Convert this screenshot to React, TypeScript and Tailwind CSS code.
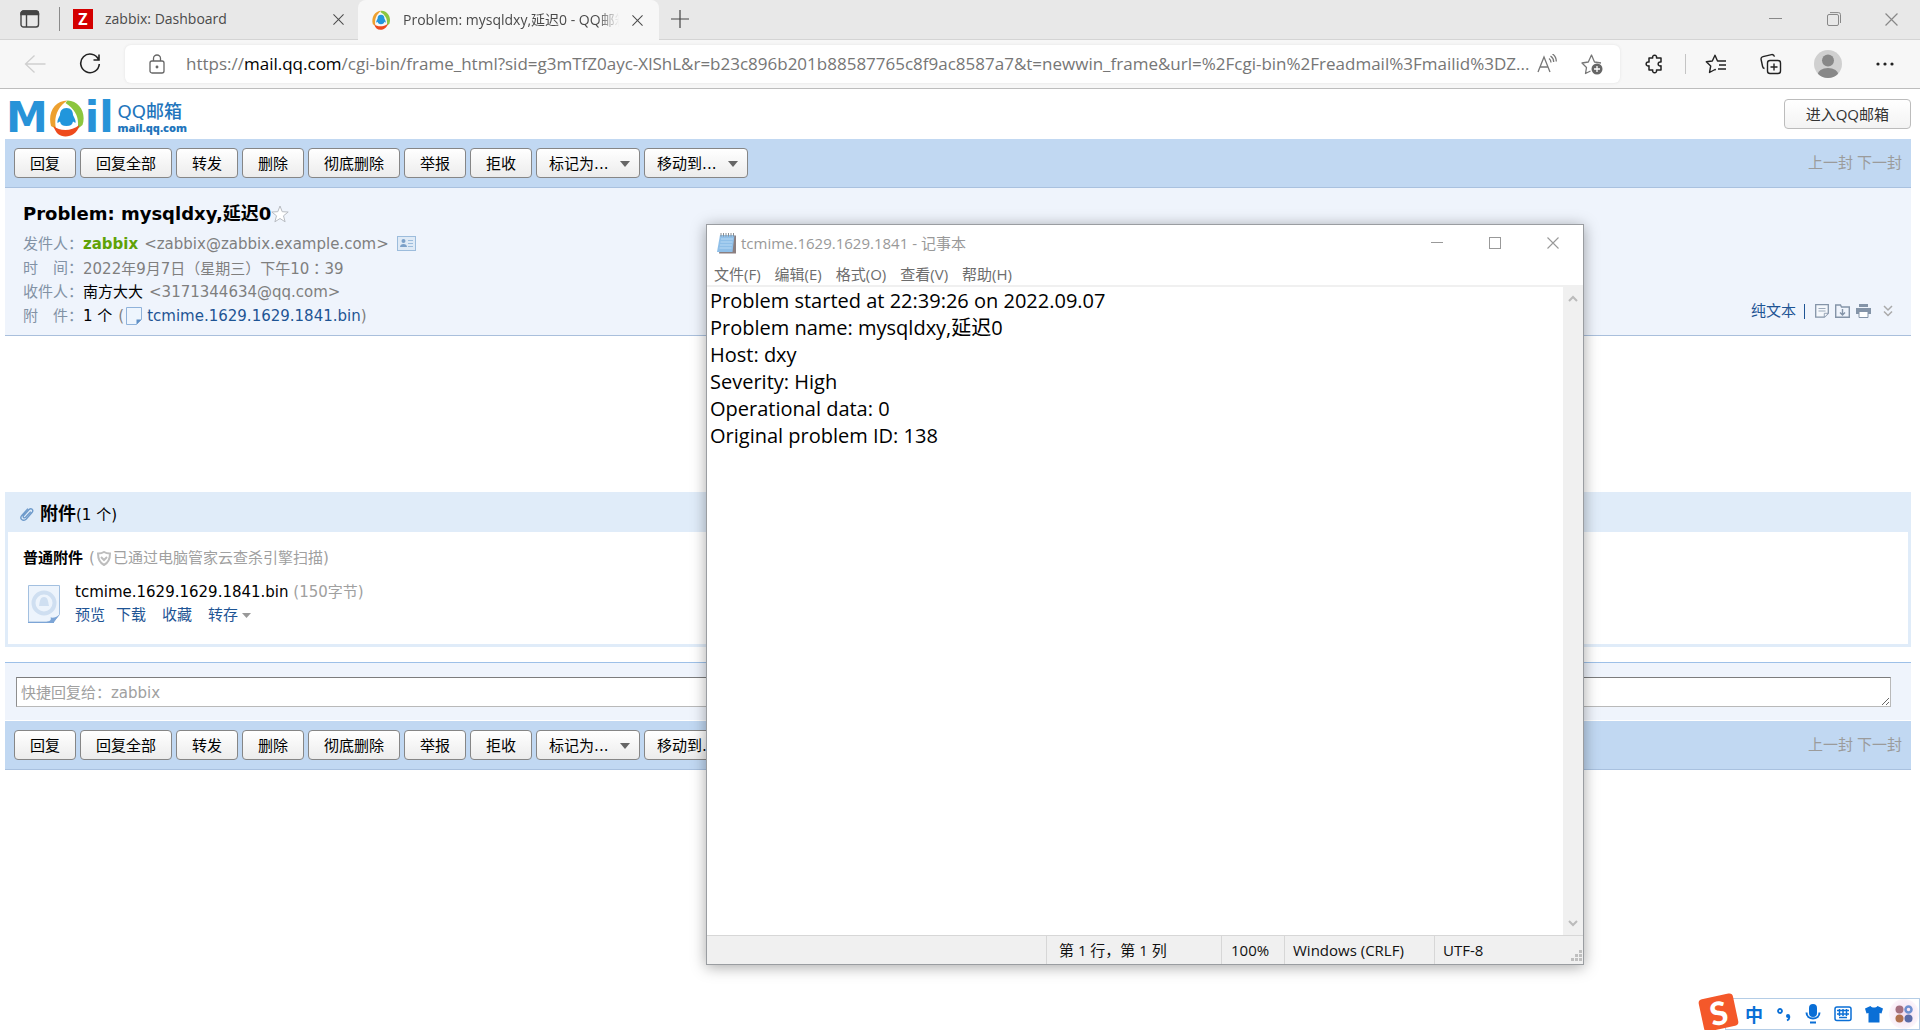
import type { ReactNode } from "react";

const actions = ["回复", "回复全部", "转发", "删除", "彻底删除", "举报", "拒收"];
const menus = ["标记为...", "移动到..."];
const notepadMenu = ["文件(F)", "编辑(E)", "格式(O)", "查看(V)", "帮助(H)"];

const notepadText = `Problem started at 22:39:26 on 2022.09.07
Problem name: mysqldxy,延迟0
Host: dxy
Severity: High
Operational data: 0
Original problem ID: 138`;

function CloseIcon({ className }: { className?: string }) {
  return (
    <svg viewBox="0 0 12 12" className={className} fill="none" stroke="currentColor" strokeWidth="1.1">
      <path d="M.5.5l11 11M11.5.5l-11 11" />
    </svg>
  );
}

function QQRing({ className }: { className?: string }) {
  return (
    <svg viewBox="0 0 36 38" className={className} fill="none">
      <path d="M19 1.500C6 1.500-1 14 2.500 27l5 3C5 18 9 8 19 1.500z" fill="#eda02f" />
      <path d="M19 1.500C31 2 38 14 34 26l-5 4c2-10-1-19-12-26z" fill="#8cc63f" />
      <path d="M5 27c6 5 17 6 26-1-2 8-8 11.500-14 11.500C11 37.500 7 34 5 27z" fill="#ee4a1c" />
      <path d="M18 9c-4.500 0-6.500 3-6.500 7-1.500 3-3 5.500-2.500 8l2.500-1.500c.5 3 2.500 4.500 6.500 4.500s6-1.500 6.500-4.500l2.500 1.500c.5-2.500-1-5-2.500-8 0-4-2-7-6.500-7z" fill="#2196dc" />
    </svg>
  );
}

function TabBar() {
  return (
    <div className="flex h-10 items-end border-b border-[#d4d4d4] bg-[#e8e8e8] text-sm text-[#4a4a4a]">
      <button aria-label="标签页操作" className="flex h-10 w-[59px] items-center pl-5">
        <svg viewBox="0 0 20 18" className="h-[18px] w-5" fill="none" stroke="#444" strokeWidth="1.400">
          <rect x="1" y="1" width="17.500" height="16" rx="2.500" />
          <path d="M1 3.500a2.500 2.500 0 0 1 2.500-2.500h12.500a2.500 2.500 0 0 1 2.500 2.500v1H1z" fill="#444" />
          <path d="M6.500 5v12" />
        </svg>
      </button>
      <div className="mb-2 h-6 w-px bg-[#8a8a8a]" />
      <div className="flex h-10 w-[298px] items-center pl-[13px] pr-[14px]">
        <span className="flex h-5 w-5 items-center justify-center bg-[#d40000] text-base leading-5 font-bold text-white">Z</span>
        <a href="#" className="ml-3 flex-1">zabbix: Dashboard</a>
        <button aria-label="关闭标签页">
          <CloseIcon className="h-[11px] w-[11px]" />
        </button>
      </div>
      <div className="-mb-px flex h-10 w-[301px] items-center rounded-t-lg bg-[#f7f7f7] pl-[13px] pr-4">
        <QQRing className="h-5 w-5" />
        <a href="#" className="ml-3 w-[216px] overflow-hidden whitespace-nowrap [mask-image:linear-gradient(to_right,black_90%,transparent)]">
          Problem: mysqldxy,延迟0 - QQ邮箱
        </a>
        <button aria-label="关闭标签页" className="ml-auto">
          <CloseIcon className="h-[11px] w-[11px]" />
        </button>
      </div>
      <button aria-label="新建标签页" className="flex h-10 items-center pl-3">
        <svg viewBox="0 0 18 18" className="h-[18px] w-[18px]" stroke="#444" strokeWidth="1.200">
          <path d="M9 0v18M0 9h18" />
        </svg>
      </button>
      <div className="ml-auto flex h-10 items-center gap-[44px] pr-[22px] text-[#888]">
        <button aria-label="最小化">
          <svg viewBox="0 0 14 14" className="h-[14px] w-[14px]" stroke="currentColor"><path d="M0 6.500h13" /></svg>
        </button>
        <button aria-label="还原">
          <svg viewBox="0 0 14 14" className="h-[14px] w-[14px]" fill="none" stroke="currentColor">
            <rect x=".5" y="2.500" width="11" height="11" rx="1.500" />
            <path d="M3 .6h8.500a2 2 0 0 1 2 2V11" />
          </svg>
        </button>
        <button aria-label="关闭"><CloseIcon className="h-[13px] w-[13px]" /></button>
      </div>
    </div>
  );
}

function AddressBar() {
  return (
    <div className="flex h-[49px] items-center border-b border-[#bdbdbd] bg-[#f7f7f7] pl-6">
      <button aria-label="后退">
        <svg viewBox="0 0 22 20" className="h-5 w-[22px]" fill="none" stroke="#cfcfcf" strokeWidth="1.300">
          <path d="M10.500 1.500L1.500 10l9 8.500M1.500 10h20" />
        </svg>
      </button>
      <button aria-label="刷新" className="ml-[33px]">
        <svg viewBox="0 0 22 22" className="h-[22px] w-[22px]" fill="none" stroke="#222" strokeWidth="1.600">
          <path d="M19.500 6.500A9.300 9.300 0 1 0 20.300 11M20 1.500v5.500h-5.500" />
        </svg>
      </button>
      <div className="ml-6 flex h-[38px] min-w-0 flex-1 items-center rounded-md bg-white pl-6 shadow-[0_0_3px_#e2e2e2]">
        <svg viewBox="0 0 16 20" className="h-5 w-4 shrink-0" fill="none" stroke="#666" strokeWidth="1.300">
          <rect x="1" y="7" width="14" height="12" rx="2" />
          <path d="M4.500 7V4.500a3.500 3.500 0 0 1 7 0V7" />
          <circle cx="8" cy="13" r=".8" fill="#666" />
        </svg>
        <div className="ml-[21px] flex-1 text-[17px] leading-6 whitespace-nowrap text-[#767676]">
          https://<span className="text-black">mail.qq.com</span>/cgi-bin/frame_html?sid=g3mTfZ0ayc-XlShL&amp;r=b23c896b201b88587765c8f9ac8587a7&amp;t=newwin_frame&amp;url=%2Fcgi-bin%2Freadmail%3Fmailid%3DZ...
        </div>
        <button aria-label="大声朗读" className="shrink-0">
          <svg viewBox="0 0 20 20" className="h-5 w-5" fill="none" stroke="#777" strokeWidth="1.300">
            <path d="M1 18L7 3l6 15M3 13h8M12 4.500c1.500 1 2 2.500 2 4M13.500 2c2.200 1.500 3.200 3.500 3.200 6M15.500 0c2.500 1.700 3.800 4.500 3.800 7.500" />
          </svg>
        </button>
        <button aria-label="添加到收藏夹" className="mr-[17px] ml-6 shrink-0">
          <svg viewBox="0 0 22 22" className="h-[22px] w-[22px]" fill="none" stroke="#777" strokeWidth="1.300">
            <path d="M9.500 18l-5 2.500 1-6L1 10l6.300-1L10.500 2l3 7 6.500 1" strokeLinejoin="round" />
            <circle cx="16" cy="16" r="5.500" fill="#666" stroke="none" />
            <path d="M16 13v6M13 16h6" stroke="white" />
          </svg>
        </button>
      </div>
      <div className="flex items-center pl-[25px]">
        <button aria-label="扩展">
          <svg viewBox="0 0 20 20" className="h-5 w-5" fill="none" stroke="#222" strokeWidth="1.500">
            <path d="M4 4h3.700c-1-3.800 4.800-3.800 3.800 0H16v4c-3.800-1-3.800 4.800 0 3.800V16h-4.500c1 3.800-4.800 3.800-3.800 0H4v-4.200c-3.800 1-3.800-4.800 0-3.800z" strokeLinejoin="round" />
          </svg>
        </button>
        <div className="ml-5 h-5 w-px bg-[#c4c4c4]" />
        <button aria-label="收藏夹" className="ml-[19px]">
          <svg viewBox="0 0 22 20" className="h-5 w-[22px]" fill="none" stroke="#222" strokeWidth="1.400">
            <path d="M13.500 7h-1L10 1.200 7.300 7l-6 .8 4.400 4.200-1.200 6.500 5.500-3 .8.400M13 7h8M14 11h7M13 15h8" strokeLinejoin="round" />
          </svg>
        </button>
        <button aria-label="集锦" className="ml-[33px]">
          <svg viewBox="0 0 22 22" className="h-[22px] w-[22px]" fill="none" stroke="#222" strokeWidth="1.400">
            <path d="M4.500 15.500c-1.200-.2-1.700-1-1.900-2L1.100 6.500C.8 5 1.500 4 3 3.600l8.500-2c1.500-.3 2.500.4 3 2" />
            <rect x="7.500" y="7.500" width="13" height="13" rx="2.500" />
            <path d="M14 10.500v7M10.500 14h7" />
          </svg>
        </button>
        <button aria-label="个人资料" className="ml-8">
          <svg viewBox="0 0 28 28" className="h-7 w-7">
            <clipPath id="face"><circle cx="14" cy="14" r="14" /></clipPath>
            <circle cx="14" cy="14" r="14" fill="#d0d0d0" />
            <g clipPath="url(#face)" fill="#888">
              <circle cx="14" cy="10.500" r="6" />
              <ellipse cx="14" cy="25" rx="10.500" ry="7" />
            </g>
          </svg>
        </button>
        <button aria-label="设置及其他" className="mr-[26px] ml-[34px]">
          <svg viewBox="0 0 18 4" className="h-1 w-[18px]" fill="#222">
            <circle cx="2" cy="2" r="1.600" /><circle cx="9" cy="2" r="1.600" /><circle cx="16" cy="2" r="1.600" />
          </svg>
        </button>
      </div>
    </div>
  );
}

function Logo() {
  return (
    <div className="flex h-[50px] items-center pt-2 pl-px">
      <span className="text-[42px] leading-[42px] font-bold text-[#2893d8]">M</span>
      <QQRing className="h-[38px] w-[37px]" />
      <span className="text-[42px] leading-[42px] font-bold text-[#2893d8]">il</span>
      <span className="ml-1 flex flex-col text-[#2275bc]">
        <span className="text-lg leading-5 font-medium">QQ邮箱</span>
        <span className="font-['Open_Sans',sans-serif] text-[11px] leading-3 font-extrabold">mail.qq.com</span>
      </span>
    </div>
  );
}

function MailToolbar() {
  return (
    <div className="flex h-[49px] items-center gap-1 border-b border-[#a9c1df] bg-[#c1d8f2] pr-[9px] pl-[9px]">
      {actions.map((label) => (
        <button key={label} className="h-[30px] rounded border border-[#868686] bg-linear-to-b from-white to-[#ececec] px-[15px] pt-px leading-7">
          {label}
        </button>
      ))}
      {menus.map((label) => (
        <div key={label} className="relative">
          <select aria-label={label} className="h-[30px] w-[104px] appearance-none rounded border border-[#868686] bg-linear-to-b from-white to-[#ececec] pt-px pl-3 leading-7">
            <option>{label}</option>
          </select>
          <svg viewBox="0 0 10 6" className="pointer-events-none absolute top-[13px] right-[10px] h-[6px] w-[10px]" fill="#666"><path d="M0 0h10L5 6z" /></svg>
        </div>
      ))}
      <div className="ml-auto flex gap-1 text-[#9b9b9b]">
        <span>上一封</span>
        <span>下一封</span>
      </div>
    </div>
  );
}

function Row({ label, children }: { label: string; children: ReactNode }) {
  return (
    <div className="flex h-6 items-center text-[#7f7f7f]">
      <span className="w-[60px] text-[#8292a5]">{label}</span>
      {children}
    </div>
  );
}

function MailHeader() {
  return (
    <div className="flex h-[148px] items-end justify-between border-b border-[#a9bfdc] bg-[#eff4fc] pr-[18px] pb-[7px] pl-[18px]">
      <div>
        <h1 className="mb-[6px] flex items-center text-lg leading-6 font-bold text-black">
          Problem: mysqldxy,延迟0
          <svg viewBox="0 0 18 18" className="h-[18px] w-[18px]" fill="#fff" stroke="#b8bcc2">
            <path d="M9 1l2.200 5.700 6 .3-4.700 3.800 1.600 6L9 13.500l-5.100 3.300 1.600-6L.8 7l6-.3z" />
          </svg>
        </h1>
        <Row label="发件人：">
          <b className="mr-[6px] text-[#5fa207]">zabbix</b>
          &lt;zabbix@zabbix.example.com&gt;
          <svg viewBox="0 0 20 16" className="ml-2 h-4 w-5" fill="none" stroke="#9cbcdc">
            <rect x=".5" y=".5" width="18" height="14" fill="#dfeaf6" />
            <circle cx="6.500" cy="5" r="2" fill="#7ba0c8" stroke="none" />
            <path d="M3 11c0-4 7-4 7 0z" fill="#7ba0c8" stroke="none" />
            <path d="M11 4.500h5M11 7.500h5M11 10.500h5" />
          </svg>
        </Row>
        <Row label="时　间：">
          <span>2022年9月7日（星期三）下午10<span className="font-['Noto_Sans_CJK_TC',sans-serif]">：</span>39</span>
        </Row>
        <Row label="收件人：">
          <span className="mr-[6px] text-black">南方大大</span>
          &lt;3171344634@qq.com&gt;
        </Row>
        <Row label="附　件：">
          <span className="mr-[6px] text-black">1 个</span>(
          <svg viewBox="0 0 16 18" className="mr-[5px] ml-[2px] h-[18px] w-4">
            <path d="M.5.5h15v12l-5 5H.5z" fill="#eef5fd" stroke="#8fb2da" />
            <path d="M15.500 12.500l-5 5v-5z" fill="#5f8fc6" />
          </svg>
          <a href="#" className="text-[#1e5494]">tcmime.1629.1629.1841.bin</a>)
        </Row>
      </div>
      <div className="mb-[6px] flex items-center">
        <a href="#" className="text-[#1e5494]">纯文本</a>
        <span className="ml-2 h-[15px] w-px bg-[#1e5494]" />
        <div className="ml-[10px] flex items-center gap-[6px] text-[#8494a8]">
          <button aria-label="记事">
            <svg viewBox="0 0 14 14" className="h-[14px] w-[14px]" fill="#f5f8fc" stroke="currentColor" strokeWidth="1.300">
              <path d="M.7.7h12.600v8.500l-4 4H.7z" /><path d="M3.500 4.500h7M3.500 7h7M9.300 13V9.300H13" strokeWidth=".8" />
            </svg>
          </button>
          <button aria-label="收藏">
            <svg viewBox="0 0 15 14" className="h-[14px] w-[15px]" fill="none" stroke="currentColor" strokeWidth="1.400">
              <path d="M.7 13.300V1h4.800l1 2h7.800v10.300zM7.500 5v5.500M5 8.500l2.500 2.500L10 8.500" />
            </svg>
          </button>
          <button aria-label="打印">
            <svg viewBox="0 0 15 14" className="h-[14px] w-[15px]" fill="currentColor">
              <path d="M3 0h9v3H3zM0 4h15v6H0z" /><path d="M3 7.500h9v6H3z" fill="#fff" stroke="currentColor" />
            </svg>
          </button>
        </div>
        <button aria-label="展开" className="ml-3 text-[#aaa]">
          <svg viewBox="0 0 10 12" className="h-3 w-[10px]" fill="none" stroke="currentColor" strokeWidth="1.500">
            <path d="M1 1l4 4 4-4M1 6.500l4 4 4-4" />
          </svg>
        </button>
      </div>
    </div>
  );
}

function Attachments() {
  return (
    <section className="border-[3px] border-[#e0ecf9] bg-white">
      <div className="flex h-[37px] items-center bg-[#e0ecf9] pt-px pl-[11px] text-black">
        <svg viewBox="0 0 17 17" className="mr-[5px] h-4 w-4" fill="none" stroke="#6f9bcb" strokeWidth="1.500">
          <path d="M12.500 6L7 12c-1.600 1.500-3.500-.3-2-2l5.500-6c2.500-2.500 5.500.3 3.300 3L7.500 14C4 17 .2 13.300 3 10l6.500-7.200" />
        </svg>
        <h2 className="text-lg font-bold">附件</h2>
        <span className="mt-[2px]">(1 个)</span>
      </div>
      <div className="h-[112px] pt-3 pl-[15px]">
        <div className="flex h-7 items-center text-[#a0a0a0]">
          <b className="mr-[6px] text-black">普通附件</b>(
          <svg viewBox="0 0 14 15" className="mx-[2px] h-[15px] w-[14px]" fill="none" stroke="#bdbdbd" strokeWidth="2">
            <path d="M1 2.500c3 0 4.500-.5 6-1.500 1.500 1 3 1.500 6 1.500C13 8.500 11 12 7 14 3 12 1 8.500 1 2.500z" />
            <path d="M4 6l3 3 3-3" />
          </svg>
          <span>已通过电脑管家云查杀引擎扫描)</span>
        </div>
        <div className="mt-1 flex pl-1">
          <svg viewBox="0 0 34 40" className="mt-2 mr-[14px] h-10 w-[34px]">
            <path d="M1.500 1.500h31v29l-6 7.500h-25z" fill="#edf4fc" stroke="#a3c0e0" />
            <circle cx="17" cy="19" r="10.500" fill="none" stroke="#cfdff1" strokeWidth="4" />
            <path d="M17 13c-4 0-4 4-5 9h10c-1-5-1-9-5-9z" fill="#cfdff1" />
            <path d="M32.500 30.500c-3 3-6 3.500-9 3 1 2 0 3.500-4 4.500h7.500z" fill="#7da5d6" />
            <path d="M1 38.500h26" stroke="#7da5d6" />
          </svg>
          <div>
            <div className="mt-1 leading-6 text-[#a0a0a0]">
              <span className="text-black">tcmime.1629.1629.1841.bin</span> (150字节)
            </div>
            <div className="flex items-center gap-4 leading-[22px] text-[#1e5494]">
              <span className="flex gap-[11px]"><a href="#">预览</a><a href="#">下载</a></span>
              <a href="#">收藏</a>
              <a href="#" className="flex items-center">
                转存
                <svg viewBox="0 0 9 5" className="ml-1 h-[5px] w-[9px]" fill="#999"><path d="M0 0h9L4.500 5z" /></svg>
              </a>
            </div>
          </div>
        </div>
      </div>
    </section>
  );
}

function Notepad() {
  return (
    <div className="absolute top-[224px] left-[706px] flex h-[741px] w-[878px] flex-col border border-[#9a9da1] bg-white shadow-[0_2px_14px_rgba(0,0,0,0.35)] font-['Open_Sans','Noto_Sans_CJK_SC',sans-serif]">
      <div className="flex h-9 items-center pr-6 pl-[9px] text-[#999]">
        <svg viewBox="0 0 21 21" className="h-[21px] w-[21px]">
          <path d="M5 2.500h15v18H3z" fill="#8b7f80" />
          <path d="M4 2h14.500L16.500 19H1z" fill="#8fbfe8" />
          <path d="M5 6h12M4.500 9h12M4 12h12M3.500 15h12" stroke="#b9daf5" />
          <path d="M5 0v3.500M7.500 0v3.500M10 0v3.500M12.500 0v3.500M15 0v3.500M17.500 0v3.500" stroke="#8a8f94" />
        </svg>
        <span className="ml-1 text-[15px]">tcmime.1629.1629.1841 - 记事本</span>
        <div className="ml-auto flex items-center gap-[46px]">
          <button aria-label="最小化"><svg viewBox="0 0 12 12" className="h-3 w-3" stroke="currentColor"><path d="M0 5.500h12" /></svg></button>
          <button aria-label="最大化"><svg viewBox="0 0 12 12" className="h-3 w-3" fill="none" stroke="currentColor"><rect x=".5" y=".5" width="11" height="11" /></svg></button>
          <button aria-label="关闭"><CloseIcon className="h-3 w-3" /></button>
        </div>
      </div>
      <div className="flex h-[26px] items-center gap-[14px] border-b-2 border-[#f0f0f0] pt-[2px] pl-[7px] text-[15px] text-[#6d6d6d]">
        {notepadMenu.map((item) => (
          <button key={item}>{item}</button>
        ))}
      </div>
      <div className="flex min-h-0 flex-1">
        <textarea
          aria-label="记事本内容"
          className="flex-1 resize-none overflow-hidden pl-[3px] text-xl leading-[27px] text-black outline-none"
          defaultValue={notepadText}
        />
        <div className="flex w-5 flex-col items-center justify-between bg-[#f0f0f0] py-2 text-[#bbb]">
          <svg viewBox="0 0 10 7" className="h-[7px] w-[10px]" fill="none" stroke="currentColor" strokeWidth="2"><path d="M1 6l4-4 4 4" /></svg>
          <svg viewBox="0 0 10 7" className="h-[7px] w-[10px]" fill="none" stroke="currentColor" strokeWidth="2"><path d="M1 1l4 4 4-4" /></svg>
        </div>
      </div>
      <div className="flex h-[29px] items-stretch border-t border-[#d7d7d7] bg-[#f0f0f0] text-[15px] leading-7 text-[#111]">
        <span className="flex-1" />
        <span className="w-[175px] border-l border-[#d7d7d7] pl-3">第 1 行，第 1 列</span>
        <span className="w-[63px] border-l border-[#d7d7d7] pl-[9px]">100%</span>
        <span className="w-[150px] border-l border-[#d7d7d7] pl-2">Windows (CRLF)</span>
        <span className="w-[137px] border-l border-[#d7d7d7] pl-2">UTF-8</span>
        <svg viewBox="0 0 12 12" className="mb-[2px] h-3 w-3 self-end" fill="#bfbfbf">
          <path d="M8 0h3v3H8zM8 4h3v3H8zM4 4h3v3H4zM8 8h3v3H8zM4 8h3v3H4zM0 8h3v3H0z" />
        </svg>
      </div>
    </div>
  );
}

function InputMethodBar() {
  return (
    <div className="absolute right-0 bottom-0 flex h-8 w-[195px] items-center gap-[13px] border border-[#b4cde6] bg-white pl-[19px] text-[#0a6fd6]">
      <div className="absolute bottom-0 -left-[25px] flex h-[33px] w-[35px] -rotate-12 items-center justify-center rounded bg-[#f4582a] font-['Lato',sans-serif] text-[32px] leading-8 font-black text-white">S</div>
      <span className="w-[18px] text-lg font-bold font-['Noto_Sans_CJK_SC',sans-serif]">中</span>
      <svg viewBox="0 0 16 16" className="h-4 w-4" fill="none" stroke="currentColor" strokeWidth="1.800">
        <circle cx="4" cy="5" r="2" /><path d="M13.200 10c.5 2-.2 3.500-2.200 4.500" /><circle cx="12" cy="10" r="2" fill="currentColor" stroke="none" />
      </svg>
      <svg viewBox="0 0 16 20" className="h-5 w-4" fill="none" stroke="currentColor" strokeWidth="2">
        <rect x="5" y="1" width="6" height="11" rx="3" fill="currentColor" /><path d="M1.500 8.500c0 8 13 8 13 0M5 18.500h6" />
      </svg>
      <svg viewBox="0 0 18 16" className="h-4 w-[18px]" fill="none" stroke="currentColor" strokeWidth="1.500">
        <rect x="1" y="1" width="16" height="13.500" rx="2" /><path d="M3 4.500h12M3 8h12M5.500 3v7M9 3v7M12.500 3v7M5 11.500h8" />
      </svg>
      <svg viewBox="0 0 18 18" className="h-[18px] w-[18px]" fill="currentColor">
        <path d="M5.500 1c1.500 2 5.500 2 7 0L18 3.500 16.500 8.500 14.500 8v9.500h-11V8l-2 .5L0 3.500z" />
      </svg>
      <span className="flex h-[30px] w-[30px] items-center justify-center rounded-full bg-radial from-[#f3ddf0] to-white -ml-[7px]">
        <svg viewBox="0 0 18 18" className="h-[18px] w-[18px]">
          <circle cx="4.500" cy="4.500" r="4" fill="#a5707f" /><circle cx="13.500" cy="4.500" r="3" fill="none" stroke="#6d8fd0" strokeWidth="2.500" />
          <circle cx="4.500" cy="13.500" r="4" fill="#b0714f" /><circle cx="13.500" cy="13.500" r="4" fill="#5a6ba8" />
        </svg>
      </span>
    </div>
  );
}

export default function App() {
  return (
    <div className="relative min-h-screen overflow-hidden bg-white font-['Open_Sans','Noto_Sans_CJK_SC',sans-serif]">
      <TabBar />
      <AddressBar />
      <main className="pr-[9px] pl-[5px] font-['DejaVu_Sans','Noto_Sans_CJK_SC',sans-serif] text-[15px] leading-[22px]">
        <header className="flex items-center justify-between">
          <Logo />
          <button className="h-[30px] rounded border border-[#bcbcbc] bg-linear-to-b from-white to-[#f3f3f3] px-[21px] font-['Open_Sans','Noto_Sans_CJK_SC',sans-serif] text-[15px] leading-7 text-[#333]">
            进入QQ邮箱
          </button>
        </header>
        <MailToolbar />
        <MailHeader />
        <div className="h-[156px]" />
        <Attachments />
        <div className="mt-[15px] border-t border-b border-t-[#9dc0e8] border-b-white bg-[#eff4fc] pt-[14px] pr-5 pb-[13px] pl-[11px]">
          <textarea
            aria-label="快捷回复"
            placeholder="快捷回复给：zabbix"
            className="block h-[30px] w-full overflow-hidden border border-[#b9b9b9] border-t-[#7c7c7c] border-l-[#8e8e8e] bg-white px-1 py-1 placeholder:text-[#a0a0a0]"
          />
        </div>
        <MailToolbar />
      </main>
      <Notepad />
      <InputMethodBar />
    </div>
  );
}
